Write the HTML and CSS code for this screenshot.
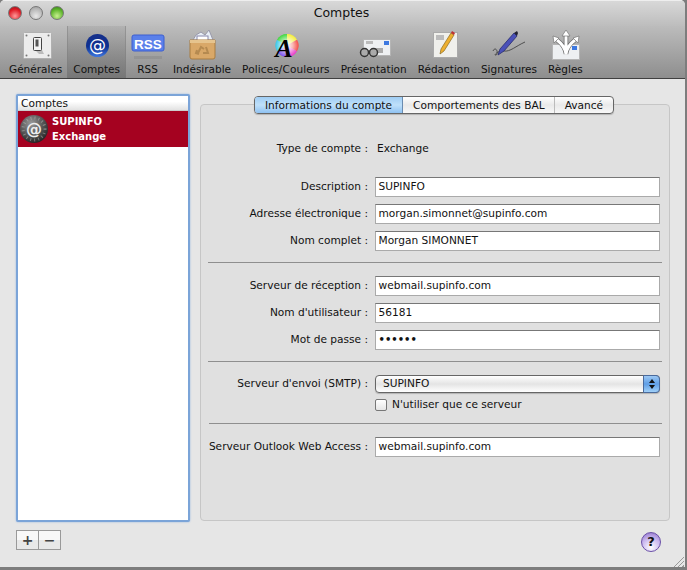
FILE: index.html
```html
<!DOCTYPE html>
<html lang="fr">
<head>
<meta charset="utf-8">
<title>Comptes</title>
<link rel="stylesheet" href="styles.css">
</head>
<body>
<div class="window">
  <header class="titlebar">
    <div class="lights">
      <span class="light red"></span>
      <span class="light grey"></span>
      <span class="light green"></span>
    </div>
    <div class="title">Comptes</div>
  </header>
  <nav class="toolbar">
    <div class="tool">
      <svg class="ico" width="34" height="34" viewBox="0 0 34 34">
        <rect x="4.500" y="3.500" width="28" height="26" rx="1" fill="#ececec" stroke="#b0b0b0"/>
        <circle cx="7.500" cy="6.500" r="1" fill="#777"/><circle cx="29.500" cy="6.500" r="1" fill="#777"/><circle cx="7.500" cy="26.500" r="1" fill="#777"/><circle cx="29.500" cy="26.500" r="1" fill="#777"/>
        <path d="M15 20l5 5h5l-3-6z" fill="#bbb"/>
        <rect x="14.500" y="8.500" width="8" height="13" rx="1" fill="#f4f4f4" stroke="#444"/>
        <rect x="16.500" y="10.500" width="3" height="7" fill="#555"/>
      </svg>
      <span>Générales</span>
    </div>
    <div class="tool on">
      <svg class="ico" width="34" height="34" viewBox="0 0 34 34">
        <defs><linearGradient id="blue" x1="0" y1="0" x2="0" y2="1"><stop offset="0" stop-color="#16308a"/><stop offset=".55" stop-color="#0e3090"/><stop offset="1" stop-color="#3f78e0"/></linearGradient></defs>
        <circle cx="17.500" cy="16.500" r="11.500" fill="url(#blue)"/>
        <text x="17.500" y="22" text-anchor="middle" class="at">@</text>
      </svg>
      <span>Comptes</span>
    </div>
    <div class="tool rss">
      <svg class="ico" width="34" height="34" viewBox="0 0 34 34">
        <rect x="1" y="6" width="32" height="16" rx="2" fill="#5a80ea" stroke="#3d5fd0"/>
        <rect x="3" y="27" width="28" height="3" fill="#888" opacity=".5"/>
        <text x="17" y="19.500" text-anchor="middle" class="rsstxt">RSS</text>
      </svg>
      <span>RSS</span>
    </div>
    <div class="tool">
      <svg class="ico" width="34" height="34" viewBox="0 0 34 34">
        <path d="M8 11l3-5 5-3 4 3 4-5 4 10z" fill="#e8eef6" stroke="#99a"/>
        <rect x="12" y="7" width="11" height="5" fill="#fff" stroke="#88a"/>
        <path d="M5 11h25v17a2 2 0 0 1-2 2H7a2 2 0 0 1-2-2z" fill="#d9a868" stroke="#a87c40"/>
        <path d="M5 11h25v3H5z" fill="#e6c48e"/>
        <path d="M13 24l3-6 3 2M21 18l2 6-5 0M12 21l-1 3 3 1" fill="none" stroke="#b58a50" stroke-width="2"/>
      </svg>
      <span>Indésirable</span>
    </div>
    <div class="tool wide">
      <svg class="ico" width="34" height="34" viewBox="0 0 34 34">
        <defs><radialGradient id="wc"><stop offset="0" stop-color="#fff"/><stop offset=".5" stop-color="#fff" stop-opacity=".6"/><stop offset="1" stop-color="#fff" stop-opacity="0"/></radialGradient></defs>
        <path d="M18 16.500L18 5A11.500 11.500 0 0 1 28 10.750z" fill="#f4ee3c"/>
        <path d="M18 16.500L28 10.750A11.500 11.500 0 0 1 28 22.250z" fill="#f4504a"/>
        <path d="M18 16.500L28 22.250A11.500 11.500 0 0 1 18 28z" fill="#e83cc8"/>
        <path d="M18 16.500L18 28A11.500 11.500 0 0 1 8 22.250z" fill="#7a50f0"/>
        <path d="M18 16.500L8 22.250A11.500 11.500 0 0 1 8 10.750z" fill="#38c8e8"/>
        <path d="M18 16.500L8 10.750A11.500 11.500 0 0 1 18 5z" fill="#40d840"/>
        <circle cx="18" cy="16.500" r="11.500" fill="url(#wc)"/>
        <text x="15" y="28" text-anchor="middle" class="glyph-a">A</text>
      </svg>
      <span>Polices/Couleurs</span>
    </div>
    <div class="tool">
      <svg class="ico" width="34" height="34" viewBox="0 0 34 34">
        <rect x="6.500" y="10.500" width="27" height="16" fill="#eef0f2" stroke="#b5b5b5"/>
        <rect x="27" y="12" width="5" height="4" fill="#3d78e0"/>
        <rect x="9" y="12" width="7" height="3" fill="#bbb"/>
        <rect x="17" y="19" width="9" height="5" fill="#aaa"/>
        <path d="M11 22h5" stroke="#444"/>
        <circle cx="7.500" cy="23.500" r="4" fill="#aaa" stroke="#333" stroke-width="1.500"/>
        <circle cx="16.500" cy="23.500" r="4" fill="#aaa" stroke="#333" stroke-width="1.500"/>
      </svg>
      <span>Présentation</span>
    </div>
    <div class="tool">
      <svg class="ico" width="34" height="34" viewBox="0 0 34 34">
        <rect x="6.500" y="3.500" width="24" height="25" fill="#f0f0ec" stroke="#aaa"/>
        <rect x="9" y="6" width="8" height="5" fill="#bbb"/>
        <path d="M13 25l1-5L24 4l3 2-10 16z" fill="#eeb030" stroke="#8a6a20" stroke-width=".7"/>
        <path d="M24 4l1-2 3 2-1 2z" fill="#c03030"/>
      </svg>
      <span>Rédaction</span>
    </div>
    <div class="tool">
      <svg class="ico" width="34" height="34" viewBox="0 0 34 34">
        <path d="M1 22c3-6 6 3 3 4s2-5 8-4 12-5 21-9" fill="none" stroke="#444" stroke-width=".9"/>
        <path d="M6 26l2-6L22 4l3 3-13 15z" fill="#4a50b8" stroke="#2a2e70" stroke-width=".8"/>
        <path d="M22 4l3-2 1 2-1 3z" fill="#223"/>
      </svg>
      <span>Signatures</span>
    </div>
    <div class="tool">
      <svg class="ico" width="34" height="34" viewBox="0 0 34 34">
        <rect x="4.500" y="15.500" width="27" height="15" fill="#eef0f2" stroke="#b5b5b5"/>
        <rect x="24" y="17" width="5" height="4" fill="#3d78e0"/>
        <path d="M18 25V6M18 25C17 18 13 14 9 11M18 25c1-7 5-11 9-14" fill="none" stroke="#6a6a6a" stroke-width="4.500"/>
        <path d="M18 25V6M18 25C17 18 13 14 9 11M18 25c1-7 5-11 9-14" fill="none" stroke="#fff" stroke-width="3"/>
        <path d="M18 1l-4 6h8zM5 7l1 7 5-5zM31 7l-1 7-5-5z" fill="#fff" stroke="#666" stroke-width=".6"/>
      </svg>
      <span>Règles</span>
    </div>
  </nav>
  <main class="content">
    <section class="side">
      <div class="list">
        <div class="list-head">Comptes</div>
        <div class="account">
          <svg width="30" height="30" viewBox="0 0 30 30">
            <defs><radialGradient id="gl" cx=".4" cy=".3" r=".8"><stop offset="0" stop-color="#999"/><stop offset="1" stop-color="#181818"/></radialGradient></defs>
            <circle cx="15" cy="15" r="14" fill="url(#gl)"/>
            <circle cx="15" cy="15" r="11" fill="none" stroke="#bbb" stroke-width="3" stroke-dasharray="1 3" opacity=".5"/>
            <text x="15" y="20.500" text-anchor="middle" class="at-grey">@</text>
          </svg>
          <div class="account-text"><b>SUPINFO</b><b>Exchange</b></div>
        </div>
      </div>
      <div class="plusminus"><button class="pm">+</button><button class="pm">−</button></div>
    </section>
    <section class="pane">
      <div class="tabs">
        <span class="tab active">Informations du compte</span>
        <span class="tab mid">Comportements des BAL</span>
        <span class="tab">Avancé</span>
      </div>
      <div class="box">
        <div class="row type"><label>Type de compte :</label><span class="val">Exchange</span></div>
        <div class="group first">
          <div class="row"><label>Description :</label><div class="input">SUPINFO</div></div>
          <div class="row"><label>Adresse électronique :</label><div class="input">morgan.simonnet@supinfo.com</div></div>
          <div class="row"><label>Nom complet :</label><div class="input">Morgan SIMONNET</div></div>
        </div>
        <hr>
        <div class="group">
          <div class="row"><label>Serveur de réception :</label><div class="input">webmail.supinfo.com</div></div>
          <div class="row"><label>Nom d'utilisateur :</label><div class="input">56181</div></div>
          <div class="row"><label>Mot de passe :</label><div class="input dots">••••••</div></div>
        </div>
        <hr>
        <div class="row select-row"><label>Serveur d'envoi (SMTP) :</label>
          <div class="select"><span>SUPINFO</span>
            <span class="stepper"><i class="up"></i><i class="down"></i></span>
          </div>
        </div>
        <div class="row check-row"><label></label><span class="check"></span><span class="check-label">N'utiliser que ce serveur</span></div>
        <hr class="hr3">
        <div class="row owa"><label>Serveur Outlook Web Access :</label><div class="input">webmail.supinfo.com</div></div>
      </div>
      <div class="help">?</div>
    </section>
  </main>
</div>
<div class="grip"></div>
</body>
</html>
```
FILE: styles.css
```css
* { box-sizing: border-box; }
html, body { margin: 0; height: 100%; }
body {
  width: 687px; height: 570px; overflow: hidden;
  background: #7d7d7d;
  font-family: "DejaVu Sans", sans-serif;
  font-size: 10.6px; color: #111;
  position: relative;
}
.window {
  width: 685px; height: 567px;
  background: #e6e6e6;
  border-radius: 5px 5px 0 0;
  overflow: hidden;
  display: flex; flex-direction: column;
}
.titlebar {
  height: 26px; flex: none;
  background: linear-gradient(#d8d8d8, #bdbdbd);
  border-top: 1px solid #eee;
  display: flex; align-items: center;
  position: relative;
}
.lights { display: flex; gap: 7px; padding-left: 8px; margin-top: -1px; }
.light { width: 14px; height: 14px; border-radius: 50%; border: 1px solid #777; }
.red { background: radial-gradient(circle at 50% 75%, #ff9a9a, #e01c26 60%, #8e1018); }
.grey { background: radial-gradient(circle at 50% 75%, #e8e8e8, #bbb 60%, #999); }
.green { background: radial-gradient(circle at 50% 75%, #c8f090, #5fb52c 60%, #2f7a14); }
.title { position: absolute; left: 0; right: 0; top: 4px; text-align: center; font-size: 12.5px; color: #111; padding-right: 2px; }
.toolbar {
  height: 53px; flex: none;
  display: flex; gap: 1px; padding-left: 4px;
  background: linear-gradient(#bcbcbc, #8e8e8e);
  border-bottom: 1px solid #404040;
  font-size: 10.5px;
}
.tool {
  padding: 0 5px 3px; display: flex; flex-direction: column; align-items: center;
  justify-content: flex-end; white-space: nowrap;
  height: 52px; color: #111;
}
.tool.rss { width: 37px; padding: 0 0 3px; margin: 0 1px 0 3px; }
.tool.wide span { letter-spacing: .12px; }
.tool .ico { flex: none; }
.tool.on {
  background: linear-gradient(rgba(90,90,90,.1), rgba(90,90,90,.45));
  box-shadow: 1px 0 0 rgba(80,80,80,.35), -1px 0 0 rgba(80,80,80,.35);
}
.at { font: 17px "DejaVu Sans", sans-serif; fill: #fff; }
.rsstxt { font: bold 13.500px "Liberation Sans", sans-serif; fill: #fff; }
.glyph-a { font: italic bold 26px "Liberation Serif", serif; fill: #000; }
.at-grey { font: bold 16px "DejaVu Sans", sans-serif; fill: #eee; }

.content { flex: 1; display: flex; padding: 15px 15px 0 16px; gap: 10px; }
.side { width: 174px; flex: none; }
.list {
  height: 428px; background: #fff;
  border: 2px solid #7ba4d8; border-radius: 2px;
  box-shadow: 0 0 2px #8fb2e0;
}
.list-head {
  height: 15px; line-height: 15px; padding-left: 3px;
  background: linear-gradient(#fff 40%, #e2e2e2);
  border-bottom: 1px solid #ccc;
}
.account {
  height: 36px; background: #a50220; color: #fff;
  display: flex; align-items: center; gap: 3px; padding-left: 1px;
}
.account-text { display: flex; flex-direction: column; line-height: 15px; font-size: 10px; }
.plusminus { display: flex; margin-top: 8px; }
.pm {
  width: 23px; height: 20px; padding: 0; margin: 0 -1px 0 0;
  border: 1px solid #999; background: linear-gradient(#f8f8f8 50%, #e8e8e8 50%);
  font: bold 14px/16px "DejaVu Sans", sans-serif; color: #444;
}
.pane { flex: 1; position: relative; padding-top: 1px; }
.tabs {
  position: absolute; top: 2px; left: 54px; z-index: 1;
  display: flex; height: 18px;
  border: 1px solid #666; border-radius: 4px;
  background: linear-gradient(#fff, #e9e9e9 50%, #f8f8f8);
  box-shadow: 0 1px 1px rgba(0,0,0,.2);
}
.tab { padding: 0 10px; line-height: 16px; border-left: 1px solid #bbb; white-space: nowrap; }
.tab:first-child { border-left: 0; border-radius: 3px 0 0 3px; }
.tab.active { background: linear-gradient(#9fcdf4, #bfe0fa 50%, #8fc2f2); border-right: 1px solid #6a8cb0; }
.tab.mid { border-left: 0; padding-right: 9px; }
.box {
  margin-top: 9px; height: 417px;
  background: #e0e0e0; border: 1px solid #c6c6c6; border-radius: 4px;
  padding-top: 34px;
}
.row { display: flex; align-items: center; height: 27px; }
.row label { width: 167px; text-align: right; flex: none; margin-right: 7px; white-space: nowrap; padding-bottom: 1px; }
.row.type label { padding-bottom: 0; margin-right: 9px; }
.type { height: 18px; }
.group.first { margin-top: 16px; }
.input {
  width: 285px; height: 20px; line-height: 17px; padding-left: 2.500px;
  background: #fff; border: 1px solid #aaa; border-top-color: #777;
}
.dots { font-size: 10px; letter-spacing: 0; font-weight: bold; }
hr { height: 1px; border: 0; background: #8f8f8f; margin: 8px 7px 9px; }
.select-row { height: 25px; }
.select {
  width: 285px; height: 18px; padding-left: 7px; line-height: 15px;
  border: 1px solid #666; border-radius: 4px;
  background: linear-gradient(#fff, #e4e4e4 50%, #fff);
  display: flex; justify-content: space-between;
  box-shadow: 0 1px 1px rgba(0,0,0,.2);
}
.stepper {
  width: 17px; margin: -1px; border-radius: 0 4px 4px 0; border: 1px solid #4a6a9c;
  background: linear-gradient(#9cc8f4, #5f9ee6 50%, #a0d0f8);
  display: flex; flex-direction: column; align-items: center; justify-content: center; gap: 2px;
}
.stepper i { width: 0; height: 0; border-left: 3px solid transparent; border-right: 3px solid transparent; }
.stepper .up { border-bottom: 4px solid #111; }
.stepper .down { border-top: 4px solid #111; }
.check-row { height: 17px; }
.check { width: 12px; height: 12px; border: 1px solid #777; border-radius: 2px; background: linear-gradient(#fff, #e6e6e6); margin-right: 5px; }
.check-label { padding-bottom: 1px; }
.hr3 { margin: 10px 7px 9px 8px; }
.help {
  position: absolute; right: 9px; top: 438px; width: 20px; height: 20px; border-radius: 50%;
  border: 1px solid #6a4fa8; background: radial-gradient(circle at 50% 80%, #fff, #c9b6ee 55%, #8a6cc8);
  font: bold 13px/18px "DejaVu Sans", sans-serif; text-align: center; color: #111;
}
.grip {
  position: absolute; left: 673px; top: 556px; width: 11px; height: 11px;
  background: repeating-linear-gradient(135deg, transparent 0 2px, #999 2px 3px);
  clip-path: polygon(100% 0, 100% 100%, 0 100%);
}
```
